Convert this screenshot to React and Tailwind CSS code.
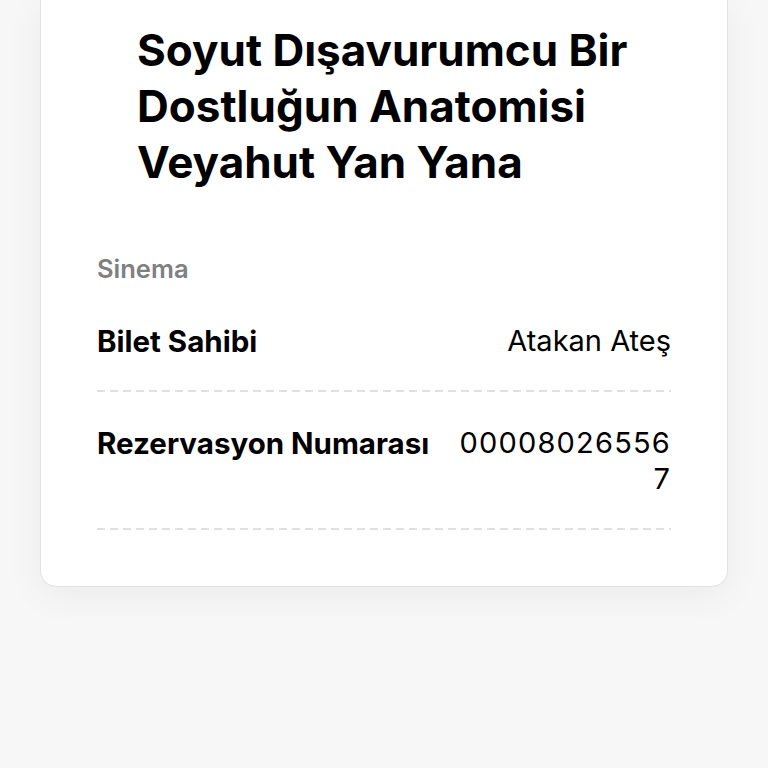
import React from 'react';

function Row({ label, value, wrap }) {
  return (
    <div>
      <div className="flex items-start justify-between gap-[30px] pt-[33px] pb-[31px]">
        <span className="text-[29.5px] leading-[36px] font-bold text-black shrink-0">{label}</span>
        <span
          className={
            'text-[29px] leading-[36px] text-black text-right ' +
            (wrap ? 'w-[216px] break-all tracking-[1.2px]' : '')
          }
        >
          {value}
        </span>
      </div>
      <div className="h-[2px] bg-[repeating-linear-gradient(to_right,#e0e0e0_0_8px,transparent_8px_13px)]" />
    </div>
  );
}

export default function App() {
  return (
    <div
      className="min-h-[768px] bg-[#f7f7f7] px-[40px]"
      style={{ fontFamily: 'Inter, "Liberation Sans", sans-serif' }}
    >
      <div className="bg-white rounded-b-[16px] border-x border-b border-[#e2e2e2] shadow-[0_8px_40px_rgba(0,0,0,0.05)] pb-[56px]">
        <h1 className="px-[96px] pt-[22px] text-[44px] leading-[56px] font-bold text-black">
          Soyut Dışavurumcu Bir Dostluğun Anatomisi Veyahut Yan Yana
        </h1>
        <div className="px-[56px] pt-[64px]">
          <div className="text-[25.5px] leading-[30px] font-semibold text-[#808080]">Sinema</div>
          <div className="pt-[6px]">
            <Row label="Bilet Sahibi" value="Atakan Ateş" />
            <Row label="Rezervasyon Numarası" value="000080265567" wrap />
          </div>
        </div>
      </div>
    </div>
  );
}
